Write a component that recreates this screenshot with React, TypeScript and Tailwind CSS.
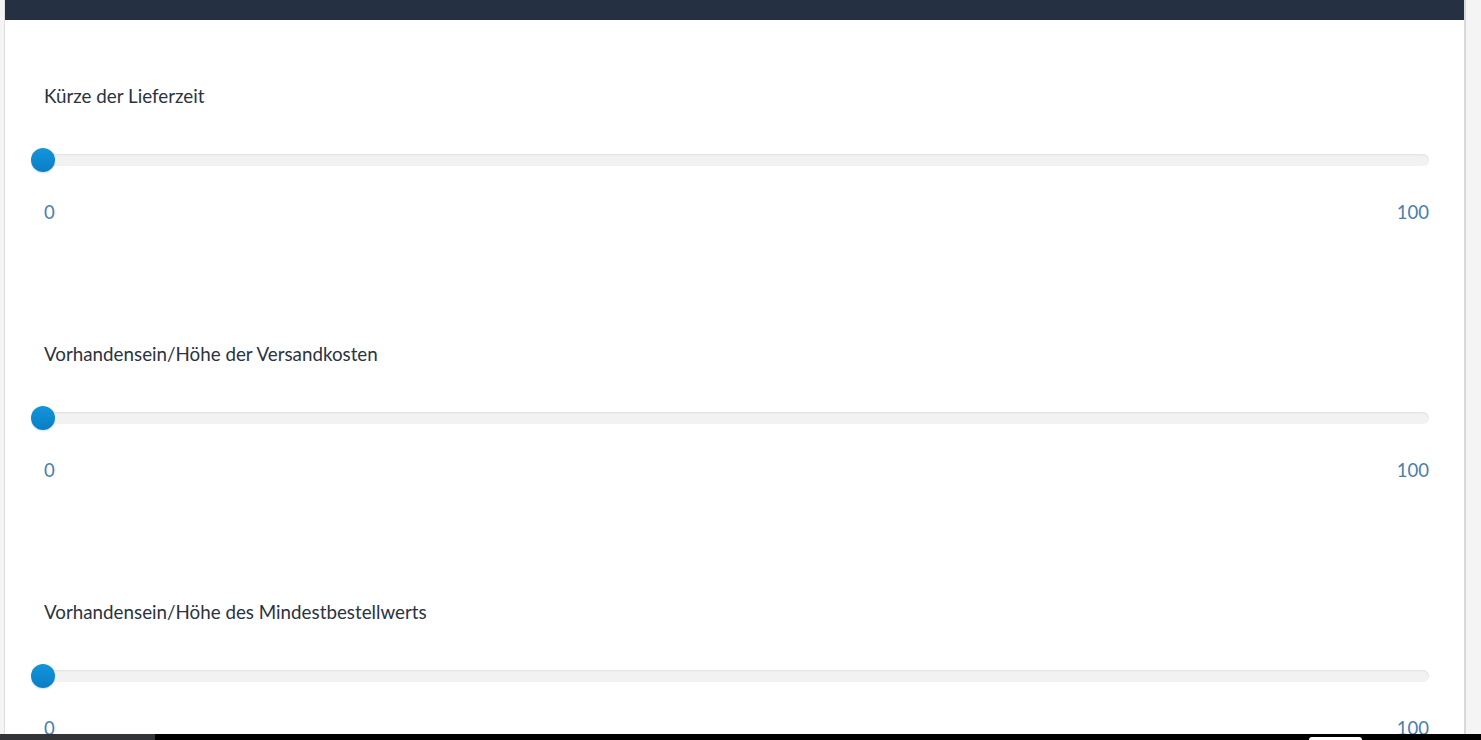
import React from "react";

const criteria = [
  "Kürze der Lieferzeit",
  "Vorhandensein/Höhe der Versandkosten",
  "Vorhandensein/Höhe des Mindestbestellwerts",
];

// Single range slider in the ion.rangeSlider look: flat track, blue knob, min/max below.
function RangeRow({ label }: { label: string }) {
  return (
    <div className="shrink-0 pb-[118px]">
      <div className="h-6 pl-[6px] text-[18.8px] leading-6 text-[#2b333f]">{label}</div>
      <div className="relative mt-[46px] h-3 rounded-full bg-[#f2f2f2] shadow-[inset_0_1px_2px_rgba(0,0,0,0.08)]">
        <div className="absolute -left-[7px] -top-[6px] h-6 w-6 rounded-full bg-gradient-to-b from-[#1295dc] to-[#0a7ec4] shadow-[0_1px_2px_rgba(0,0,0,0.15)]" />
      </div>
      <div className="mt-[34px] flex h-6 justify-between pl-[6px] text-[18.5px] leading-6 text-[#4a7ead]">
        <span>0</span>
        <span>100</span>
      </div>
    </div>
  );
}

export default function App() {
  return (
    <div
      className="relative flex h-[740px] w-full overflow-hidden bg-[#f4f4f4]"
      style={{ fontFamily: "Lato, 'Open Sans', sans-serif" }}
    >
      <div className="w-[5px] shrink-0 border-r border-[#dedede]" />
      <div className="flex w-[1461px] shrink-0 flex-col overflow-hidden border-r-2 border-[#d9d9d9] bg-white">
        <div className="h-5 shrink-0 bg-[#253142]" />
        <div className="shrink-0 pl-[33px] pr-[35px] pt-[64px]">
          {criteria.map((c) => (
            <RangeRow key={c} label={c} />
          ))}
        </div>
      </div>

      {/* taskbar strip over the bottom edge */}
      <div className="absolute bottom-0 left-0 flex h-[6px] w-full bg-black">
        <div className="w-[155px] bg-[#333437]" />
        <div className="ml-[1154px] mt-[3px] h-[3px] w-[53px] rounded-t-sm bg-white" />
      </div>
    </div>
  );
}
